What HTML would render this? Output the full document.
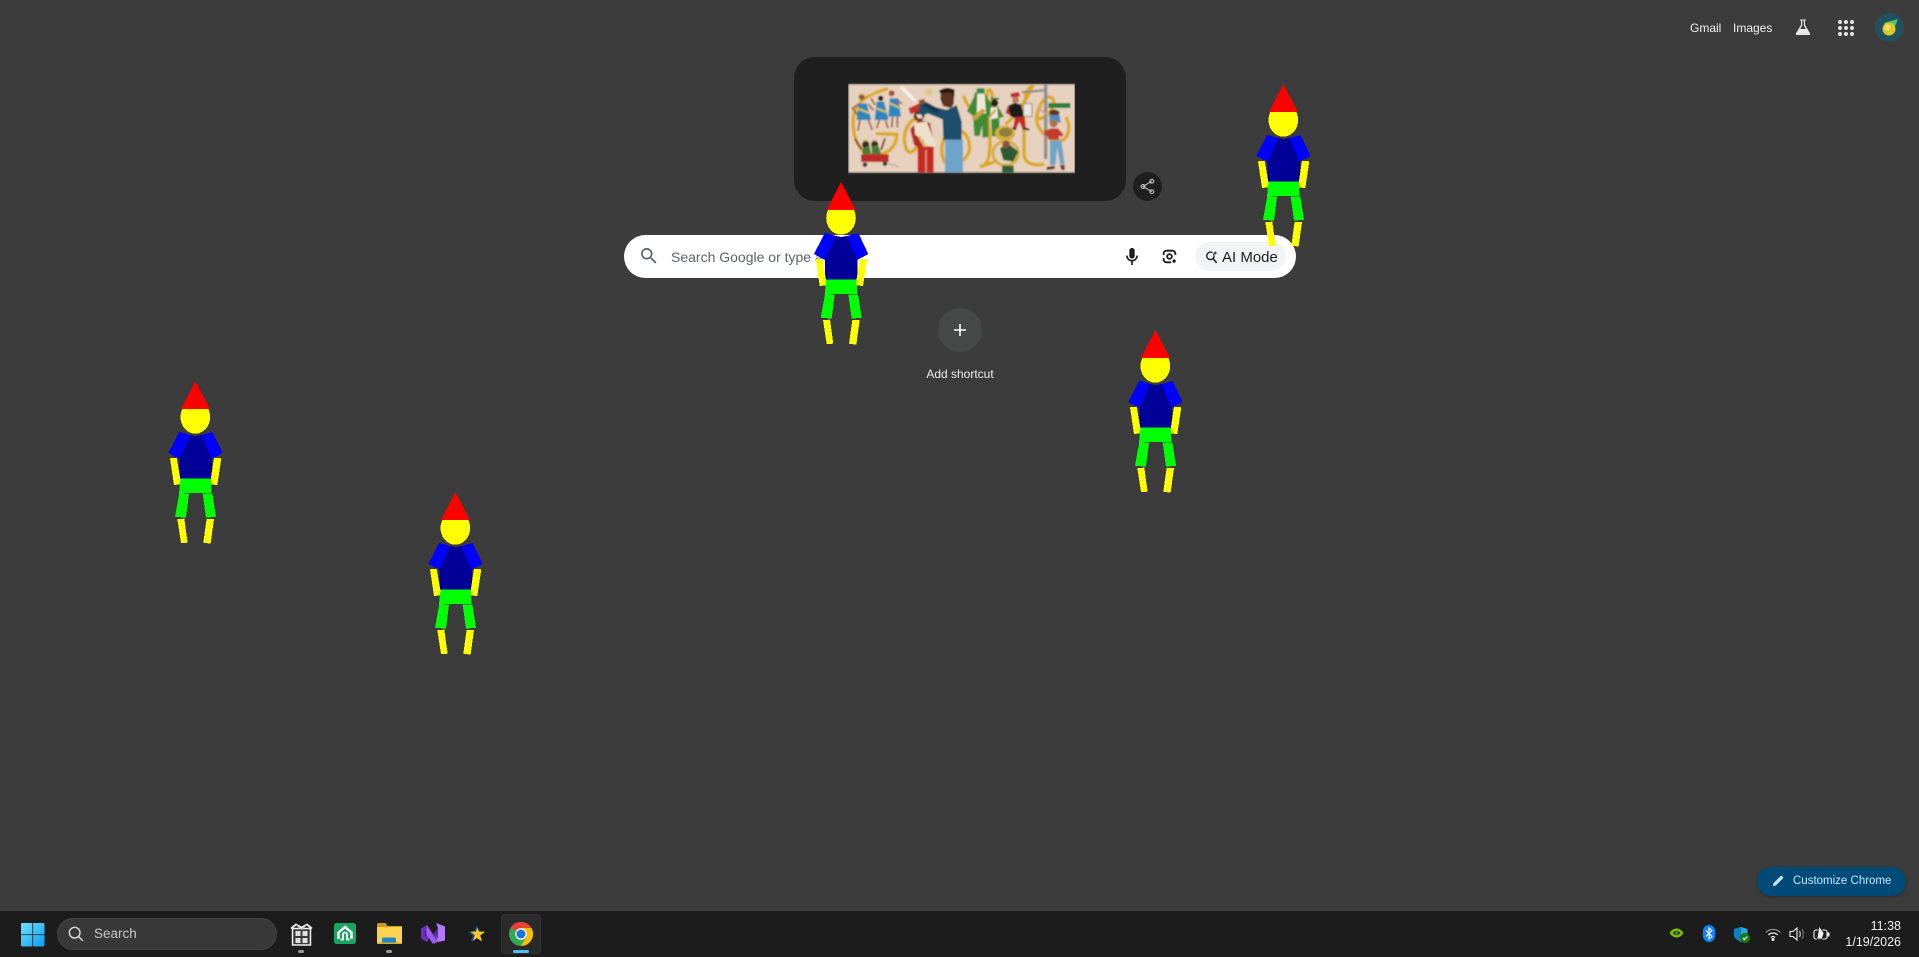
<!DOCTYPE html>
<html lang="en"><head><meta charset="utf-8"><title>New Tab</title>
<style>
html,body{margin:0;padding:0;width:1919px;height:957px;overflow:hidden;background:#3c3c3c;font-family:"Liberation Sans",sans-serif}
.a{position:absolute}
.t{position:absolute;white-space:nowrap}
</style></head><body>

<!-- top right -->
<div class="t" style="left:1690px;top:20px;font-size:12px;line-height:16px;color:#f1f1f1">Gmail</div>
<div class="t" style="left:1733px;top:20px;font-size:12px;line-height:16px;color:#f1f1f1">Images</div>
<svg class="a" style="left:1794px;top:18px" width="18" height="18" viewBox="0 0 18 18"><path d="M6 1.500h6v1H11v4.500l5 8.200c.5.900 0 1.800-1 1.800H3c-1 0-1.500-.9-1-1.800L7 7V2.500H6z" fill="#e8e8e8"/><path d="M8.200 2.500h1.600v5l2 3.500H6.200l2-3.500z" fill="#3c3c3c"/></svg>
<svg class="a" style="left:1837px;top:19px" width="18" height="18" viewBox="0 0 18 18" fill="#e3e3e3"><circle cx="3" cy="3" r="2"/><circle cx="9" cy="3" r="2"/><circle cx="15" cy="3" r="2"/><circle cx="3" cy="9" r="2"/><circle cx="9" cy="9" r="2"/><circle cx="15" cy="9" r="2"/><circle cx="3" cy="15" r="2"/><circle cx="9" cy="15" r="2"/><circle cx="15" cy="15" r="2"/></svg>
<svg class="a" style="left:1875px;top:13px" width="29" height="29" viewBox="0 0 29 29"><circle cx="14.500" cy="14.500" r="14.500" fill="#23505f"/><path d="M9 10L23 6L17 21z" fill="#4fc46c"/><circle cx="14" cy="16" r="6.500" fill="#d8c92e"/><circle cx="12.500" cy="14.500" r="3" fill="#efe25a"/></svg>

<!-- doodle card -->
<div class="a" style="left:794px;top:57px;width:332px;height:144px;border-radius:21px;background:#1f1f1f"></div>
<svg class="a" style="left:840px;top:75px" width="240" height="105" viewBox="0 0 720 315">
<defs><filter id="b" x="0" y="0" width="100%" height="100%"><feGaussianBlur stdDeviation="2"/></filter></defs>
<g filter="url(#b)">
<rect x="25" y="26" width="680" height="268" fill="#e6d0be"/>
<rect x="25" y="26" width="680" height="3" fill="#8f887f"/>
<rect x="25" y="291" width="680" height="4" fill="#8f887f"/>
<g fill="none" stroke="#dca817" stroke-width="10" stroke-linecap="round">
<path d="M140 42C95 55 45 75 40 130C36 190 60 240 100 240C150 240 170 210 170 178L112 176"/>
<path d="M225 130C195 150 185 190 200 225C215 245 240 215 240 175C240 150 232 135 225 130"/>
<path d="M345 165C305 175 298 225 312 258C328 280 375 270 388 225C392 190 375 165 345 165"/>
<path d="M372 65C385 110 425 120 445 95C465 70 455 40 445 45C430 70 450 150 450 200C450 250 440 275 420 275L460 262"/>
<path d="M578 35C560 35 555 60 552 110L552 240C555 268 585 272 608 268"/>
<path d="M590 125C600 145 650 105 640 75C625 45 590 90 590 135C595 175 640 205 670 195C690 180 690 150 680 130"/>
<path d="M500 145C530 120 555 80 575 40"/>
</g>
<!-- cheerleaders -->
<g>
<path d="M55 85h25l14 50H50z" fill="#2f86bf"/><circle cx="65" cy="66" r="9" fill="#8a5a35"/><path d="M56 60q9-10 18 0z" fill="#e3a33a"/>
<path d="M110 80h22l14 55h-42z" fill="#2f86bf"/><circle cx="122" cy="70" r="8" fill="#2b1d18"/>
<path d="M150 70h25l8 55h-38z" fill="#2f86bf"/><circle cx="155" cy="55" r="9" fill="#a5563e"/>
<path d="M60 135l-6 32M85 135l12 30M118 135l-8 25M136 135l8 25M158 125l-3 32M172 125l0 32" stroke="#9a5f3c" stroke-width="5"/>
<path d="M50 100l38 14M110 100l30 12M150 85l30 14M90 60l24-15" stroke="#d8c04a" stroke-width="6"/>
<path d="M55 88l-18 12 18 22M85 88l15 18M105 90L93 70M172 75l14 12" fill="none" stroke="#9a5f3c" stroke-width="5"/>
</g>
<!-- wagon -->
<path d="M45 192l20 30M135 190l-12 35" stroke="#7a4a2a" stroke-width="6"/>
<circle cx="77" cy="209" r="11" fill="#3a2a1e"/><circle cx="104" cy="209" r="11" fill="#3a2a1e"/>
<path d="M67 198l7-5 3 5 3-5 7 5zM94 198l7-5 3 5 3-5 7 5z" fill="#d9a52a"/>
<path d="M66 220l22-8 6 26H68zM94 214l20-4 10 28H96z" fill="#4a7a36"/>
<rect x="63" y="238" width="83" height="23" fill="#bd2a25"/>
<circle cx="75" cy="269" r="7" fill="#3c3a38"/><circle cx="135" cy="266" r="7" fill="#3c3a38"/>
<path d="M146 265l30 10" stroke="#8c8780" stroke-width="2"/>
<!-- feather -->
<path d="M186 38L224 76" stroke="#f5f0ea" stroke-width="10" stroke-linecap="round"/>
<path d="M250 42l10 6 8-8 6 8 8-4-8 18h-14z" fill="#dfc786"/>
<!-- band kid -->
<path d="M212 160l28-26 30 10 14 70-6 20-42-15-14-10-10-40z" fill="#b52a22"/>
<path d="M222 145l38-5 12 30 18 45-25 10-15-30-24-15z" fill="#eae0cc"/>
<path d="M240 180l18 30 28 10-6 8-26-8-18-30z" fill="#d9c17f"/>
<rect x="233" y="215" width="48" height="78" fill="#c42a1f"/>
<rect x="256" y="225" width="4" height="68" fill="#e8a0a0"/>
<circle cx="237" cy="122" r="16" fill="#5c3526"/>
<path d="M205 100l36-16 9 16-38 18z" fill="#c72d25"/>
<path d="M228 118h16l4 12h-14z" fill="#e8dccb"/>
<!-- man -->
<path d="M240 85l80 20 30-15 15 50v55h-55l-2-62-45-18-15 8-12-12z" fill="#1f4e6b"/>
<path d="M240 80l55 30" stroke="#15384f" stroke-width="16"/>
<rect x="315" y="194" width="54" height="98" fill="#6ea4ca"/>
<path d="M303 45q22-14 40 2l-2 40-8 12-24-6-8-22z" fill="#5c3020"/>
<path d="M296 48q20-14 48-4l-2 25-8-18-32 4z" fill="#1f1512"/>
<path d="M235 76l18-4 4 12-16 6z" fill="#8a5334"/>
<!-- green band -->
<path d="M405 52h28l24 40-12 30v65h-18v-38l-8 34h-16l-4-60-18-15 20-40z" fill="#3f8b35"/>
<path d="M410 40h24v14h-24z" fill="#2c8a3d"/>
<path d="M412 56h22l4 60-28-4z" fill="#efe8d6"/>
<path d="M395 128l32-28 10 8-30 28z" fill="#c9a23a"/>
<path d="M452 68h25v6h-25z" fill="#2c8a3d"/>
<circle cx="464" cy="84" r="11" fill="#2b1d18"/>
<path d="M448 95h26l18 30-14 4v55h-22l-3-60-14 6z" fill="#3f8b35"/>
<path d="M452 97h20l2 32-24 4z" fill="#efe8d6"/>
<path d="M445 130l22-26" stroke="#c9a23a" stroke-width="6"/>
<!-- tuba -->
<ellipse cx="495" cy="175" rx="30" ry="23" fill="#d6ad3c"/><ellipse cx="497" cy="172" rx="20" ry="14" fill="#8f7d3a"/>
<ellipse cx="497" cy="235" rx="38" ry="36" fill="none" stroke="#d6ad3c" stroke-width="9"/>
<path d="M480 220l25-15 30 25-15 30-30-5z" fill="#2e5a32"/>
<circle cx="498" cy="208" r="11" fill="#8a5334"/>
<rect x="486" y="272" width="35" height="21" fill="#2e5f34"/>
<!-- drummer -->
<path d="M512 55l25-4 3 14-27 3z" fill="#c02a25"/>
<circle cx="527" cy="75" r="10" fill="#b97a55"/>
<path d="M505 92l18-8 20 4 10 38-24 6-20-10z" fill="#1c1a1b"/>
<path d="M503 92l-6 22 16 8z" fill="#b52a22"/>
<rect x="550" y="86" width="26" height="38" rx="3" fill="#e9e5dc" stroke="#555" stroke-width="2"/>
<path d="M525 126h28l5 36h-10l-10-22-10 22h-9z" fill="#c42a22"/>
<path d="M518 158l10 6M548 160l20 4" stroke="#1c1a1b" stroke-width="6"/>
<!-- pole + sign -->
<rect x="612" y="27" width="10" height="225" fill="#8f8f8f"/>
<path d="M545 52l68-6" stroke="#8f8f8f" stroke-width="7"/>
<rect x="625" y="84" width="66" height="15" fill="#2a7d3f"/>
<!-- person -->
<path d="M595 100l30 20 20 0 15-10" fill="none" stroke="#d9a088" stroke-width="6"/>
<path d="M628 118h30l5 24h-35z" fill="#4b8ac3"/>
<path d="M628 108q14-10 30 2l-2 10h-26z" fill="#5a3524"/>
<circle cx="641" cy="145" r="12" fill="#a9735a"/>
<path d="M612 170l20-10h22l16 18-4 8-8-4-2 12h-30l-2-10-10-4z" fill="#c43a2f"/>
<path d="M630 196h34l10 72h-14l-8-50-6 52h-16z" fill="#6ea4ca"/>
<path d="M620 276l24-4v10l-24 3zM660 270h14v15h-10z" fill="#6b3a22"/>
</g></svg>
<div class="a" style="left:1133px;top:172px;width:29px;height:29px;border-radius:50%;background:#1f1f1f"></div>
<svg class="a" style="left:1139px;top:178px" width="17" height="17" viewBox="0 0 17 17"><path d="M12.800 3.300L4 8.500l8.800 5.200" fill="none" stroke="#c9c9c9" stroke-width="1"/><circle cx="12.800" cy="3.300" r="1.900" fill="none" stroke="#c9c9c9" stroke-width="1.100"/><circle cx="4" cy="8.500" r="1.900" fill="none" stroke="#c9c9c9" stroke-width="1.100"/><circle cx="12.800" cy="13.700" r="1.900" fill="none" stroke="#c9c9c9" stroke-width="1.100"/></svg>

<!-- search box -->
<div class="a" style="left:624px;top:235px;width:672px;height:43px;border-radius:22px;background:#fff"></div>
<svg class="a" style="left:641px;top:248px" width="16" height="16" viewBox="3 3 18 18" fill="#5f6368"><path d="M15.500 14h-.79l-.28-.27A6.471 6.471 0 0 0 16 9.500 6.500 6.500 0 1 0 9.500 16c1.610 0 3.090-.59 4.230-1.570l.27.28v.79l5 4.990L20.490 19l-4.990-5zm-6 0C7.010 14 5 11.990 5 9.500S7.010 5 9.500 5 14 7.010 14 9.500 11.990 14 9.500 14z"/></svg>
<div class="t" style="left:671px;top:248px;font-size:14px;line-height:18px;color:#5f6368">Search Google or type a URL</div>
<svg class="a" style="left:1126px;top:248px" width="12" height="17" viewBox="5 2 14 20" fill="#1f1f1f"><path d="M12 14.500c1.900 0 3.200-1.400 3.200-3.200V5.200C15.200 3.400 13.900 2 12 2S8.800 3.400 8.800 5.200v6.100c0 1.800 1.300 3.200 3.200 3.200zM17 11c0 2.760-2.240 5-5 5s-5-2.240-5-5H5c0 3.530 2.610 6.430 6 6.920V22h2v-4.080c3.390-.49 6-3.390 6-6.920h-2z"/></svg>
<svg class="a" style="left:1162px;top:249px" width="15" height="15" viewBox="0 0 18 18"><path d="M2 7V5.500C2 3.500 3.500 2 5.500 2H7M11 2h1.500C14.500 2 16 3.500 16 5.500V7M2 11v1.500C2 14.500 3.500 16 5.500 16H11" fill="none" stroke="#1f1f1f" stroke-width="2.300"/><circle cx="9" cy="9" r="2.800" fill="none" stroke="#1f1f1f" stroke-width="2.200"/><circle cx="14.500" cy="14.500" r="2" fill="#1f1f1f"/><rect x="6.500" y=".8" width="5" height="2.400" fill="#1f1f1f"/></svg>
<div class="a" style="left:1195px;top:242px;width:91px;height:29px;border-radius:15px;background:#f1f3f4"></div>
<svg class="a" style="left:1205px;top:250px" width="14" height="14" viewBox="0 0 17 18"><circle cx="6.500" cy="7.500" r="4.800" fill="none" stroke="#1f1f1f" stroke-width="1.800"/><path d="M10 11l4.500 5.500" stroke="#1f1f1f" stroke-width="2"/><path d="M12.500 0l1 2.800L16.500 4l-3 1.100L12.500 8l-1-2.900L8.500 4l3-1.200z" fill="#1f1f1f" stroke="#f1f3f4" stroke-width=".8"/></svg>
<div class="t" style="left:1222px;top:249px;font-size:15px;line-height:18px;color:#1f1f1f">AI Mode</div>

<!-- add shortcut -->
<div class="a" style="left:938px;top:308px;width:44px;height:44px;border-radius:50%;background:#474948"></div>
<svg class="a" style="left:954px;top:324px" width="12" height="12" viewBox="0 0 12 12"><path d="M6 0v12M0 6h12" stroke="#fff" stroke-width="1.600"/></svg>
<div class="t" style="left:860px;width:200px;top:366px;text-align:center;font-size:12px;line-height:16px;color:#ececec">Add shortcut</div>

<!-- customize chrome -->
<div class="a" style="left:1757px;top:867px;width:149px;height:29px;border-radius:15px;background:#004a77;box-shadow:0 1px 3px rgba(0,0,0,.3)"></div>
<svg class="a" style="left:1772px;top:875px" width="12" height="12" viewBox="0 0 14 14" fill="#c2e7ff"><path d="M1 13l.8-3.500L9.300 2l2.700 2.700L4.500 12.200zM10.200 1.200a1 1 0 0 1 1.400 0l1.200 1.200a1 1 0 0 1 0 1.400l-.8.800L9.400 2z"/></svg>
<div class="t" style="left:1793px;top:873px;font-size:11.500px;line-height:16px;color:#c2e7ff">Customize Chrome</div>

<!-- figures -->
<svg class="a" style="left:0;top:0;pointer-events:none" width="1919" height="957" shape-rendering="crispEdges">
<defs><g id="f">
<ellipse cx="0" cy="36" rx="14.800" ry="16.700" fill="#ff0"/>
<polygon points="0,0 -14.300,28 14.700,28" fill="#f00"/>
<polygon points="-16,52 -5,54 0,55 6,54 17,52 16.500,97.300 -16,97.300" fill="#009"/>
<polygon points="-16,50.700 -5.300,54 -16,78 -27,72" fill="#00f"/>
<polygon points="6.300,54 17.300,51 27.300,72 16.300,78" fill="#00f"/>
<polygon points="-25.300,77.300 -18.700,76.700 -14,103.300 -21.300,104" fill="#ff0"/>
<polygon points="18.700,76.700 26,77.300 22,104 14.700,103.300" fill="#ff0"/>
<polygon points="-14.700,97.300 15.300,97.300 16.300,112 -16.300,112.300" fill="#0f0"/>
<polygon points="-16,112.300 -6.300,112.300 -9.300,136.700 -20.300,135.700" fill="#0f0"/>
<polygon points="7.300,112.300 17,112.300 20.700,135.700 10.700,136.700" fill="#0f0"/>
<polygon points="-18,138 -11,137.700 -7.700,161.700 -14.300,162" fill="#ff0"/>
<polygon points="11.300,138 18.700,138 15.300,162.700 8,161.700" fill="#ff0"/>
</g></defs>
<use href="#f" x="195.300" y="381"/>
<use href="#f" x="455.300" y="492"/>
<use href="#f" x="841" y="182"/>
<use href="#f" x="1155.300" y="330"/>
<use href="#f" x="1283.300" y="84"/>
</svg>

<!-- taskbar -->
<div class="a" style="left:0;top:911px;width:1919px;height:46px;background:#1c1c1c"></div>
<svg class="a" style="left:21px;top:923px" width="23.500" height="23.500" viewBox="0 0 24 24"><defs><linearGradient id="w" x1="0" y1="0" x2="1" y2="1"><stop offset="0" stop-color="#6fe1ff"/><stop offset="1" stop-color="#0a9cf0"/></linearGradient></defs><path d="M0 1.500A1.500 1.500 0 0 1 1.500 0h10.100v11.600H0zM12.400 0h10.100A1.500 1.500 0 0 1 24 1.500v10.100H12.400zM0 12.400h11.600V24H1.500A1.500 1.500 0 0 1 0 22.500zM12.400 12.400H24v10.100a1.500 1.500 0 0 1-1.500 1.500H12.400z" fill="url(#w)"/></svg>
<div class="a" style="left:57px;top:918px;width:220px;height:32px;box-sizing:border-box;border-radius:16px;background:#383838;border:1px solid #434343"></div>
<svg class="a" style="left:68px;top:926px" width="16" height="16" viewBox="0 0 18 18"><circle cx="7.500" cy="7.500" r="6" fill="none" stroke="#d8d8d8" stroke-width="1.600"/><path d="M11.800 11.800l5 5" stroke="#d8d8d8" stroke-width="1.600"/></svg>
<div class="t" style="left:94px;top:925px;font-size:13.500px;line-height:18px;color:#c8c8c8">Search</div>

<!-- building -->
<svg class="a" style="left:290px;top:922px" width="23" height="24" viewBox="0 0 23 24"><path d="M2.500 6.500h18V23h-18z" fill="#3a3a3a" stroke="#f0f0f0" stroke-width="1.500"/><path d="M1 6.500l5-4 5.500 3 5.500-3 5 4" fill="none" stroke="#f0f0f0" stroke-width="1.800"/><path d="M6 2.500l5.500 5 5.500-5" fill="none" stroke="#bbb" stroke-width="1"/><rect x="5.500" y="9" width="5" height="5" fill="#e0e0e0"/><rect x="12.500" y="9" width="5" height="5" fill="#e0e0e0"/><rect x="5.500" y="16" width="5" height="5" fill="#e0e0e0"/><rect x="12.500" y="16" width="5" height="5" fill="#e0e0e0"/></svg>
<div class="a" style="left:298px;top:950px;width:6px;height:3px;border-radius:2px;background:#9a9a9a"></div>
<!-- green -->
<svg class="a" style="left:334px;top:923px" width="22" height="21" viewBox="0 0 22 21"><rect width="22" height="21" rx="2.500" fill="#1ba35f"/><path d="M4.500 16v-6.500L11 4l6.500 5.500V16" fill="none" stroke="#fff" stroke-width="2.400"/><path d="M6.500 16.500h2.500V11.500a2 2 0 0 1 4 0v5h2.500" fill="none" stroke="#fff" stroke-width="1.800"/></svg>
<!-- folder -->
<svg class="a" style="left:377px;top:923px" width="25" height="21" viewBox="0 0 25 21"><path d="M0 2a2 2 0 0 1 2-2h6.500l2 3H25v5H0z" fill="#d29a1c"/><path d="M0 4h25v17H0z" fill="#fbd34e"/><path d="M5 21v-4.500a2 2 0 0 1 2-2h10a2 2 0 0 1 2 2V21z" fill="#1a86d0"/><rect y="19.500" width="25" height="1.500" fill="#e0a91f"/></svg>
<div class="a" style="left:386px;top:950px;width:6px;height:3px;border-radius:2px;background:#9a9a9a"></div>
<!-- VS -->
<svg class="a" style="left:421px;top:923px" width="24" height="21" viewBox="0 0 24 21"><path d="M0 5.500L6 2l5 8.500L6 19l-6-3.500z" fill="#6a2fc0"/><path d="M4 8l3 2.500L4 13z" fill="#2a1050"/><path d="M6 2L17 19l-5 2-7-10z" fill="#9a5cec"/><path d="M15 0l9 3.500v14L17 19l-4-8.500L17 5z" fill="#b27af5"/><path d="M13 10.500L17 5v11z" fill="#5a25a8"/></svg>
<!-- star -->
<svg class="a" style="left:467px;top:925px" width="19" height="18" viewBox="0 0 19 18"><path d="M10 1l2 5.500 6 .2-4.700 3.800 1.700 6-5-3.400-5.300 3.400 2-6L2 6.700l6-.2z" fill="#f6c62c"/><path d="M8 6.500L10 1M2 6.700L6.700 10.500 4.700 16.500" fill="none" stroke="#14408f" stroke-width="1.800"/></svg>
<!-- chrome -->
<div class="a" style="left:501px;top:914px;width:40px;height:40px;box-sizing:border-box;border-radius:4px;background:#2a2a2a;border:1px solid #323232"></div>
<svg class="a" style="left:509px;top:922px" width="24" height="24" viewBox="0 0 48 48"><circle cx="24" cy="24" r="24" fill="#34a853"/><path d="M24 0a24 24 0 0 1 20.800 12H24a12 12 0 0 0-10.400 6L3.200 12A24 24 0 0 1 24 0z" fill="#ea4335"/><path d="M44.800 12H24l10.400 18L24 48A24 24 0 0 0 44.800 12z" fill="#fbbc04"/><circle cx="24" cy="24" r="11.500" fill="#fff"/><circle cx="24" cy="24" r="9" fill="#1a73e8"/></svg>
<div class="a" style="left:513px;top:950px;width:16px;height:3px;border-radius:2px;background:#4cc2ff"></div>

<!-- tray -->
<svg class="a" style="left:1670px;top:927px" width="13" height="12" viewBox="0 0 14 12"><path d="M1 6q6-7 12 0q-6 7-12 0z" fill="none" stroke="#76b900" stroke-width="3"/><circle cx="7" cy="6" r="1.300" fill="#76b900"/></svg>
<svg class="a" style="left:1703px;top:925px" width="12" height="17" viewBox="0 0 12 17"><rect width="12" height="17" rx="6" fill="#0a84ff"/><path d="M3 5.500l6 6L6 14V3l3 2.500L3 11.500" fill="none" stroke="#fff" stroke-width="1.100"/></svg>
<svg class="a" style="left:1734px;top:926px" width="16" height="17" viewBox="0 0 16 17"><path d="M7 1l6.500 2V9c0 3-3 5.500-6.500 7-3.500-1.500-7-4-7-7V3z" fill="#2aa8e0"/><path d="M7 1v15C3.500 14.500 0 12 0 9V3z" fill="#0f7fc0"/><circle cx="11" cy="12" r="5" fill="#107c10"/><path d="M8.800 12l1.600 1.600 2.800-3" fill="none" stroke="#fff" stroke-width="1.200"/></svg>
<svg class="a" style="left:1765px;top:928px" width="16" height="13" viewBox="0 0 16 13" fill="none" stroke="#f0f0f0" stroke-width="1.200"><path d="M.8 4.500a10 10 0 0 1 14.400 0" stroke="#999"/><path d="M3.300 7a6.500 6.500 0 0 1 9.400 0"/><path d="M5.800 9.500a3 3 0 0 1 4.400 0"/><circle cx="8" cy="11.500" r=".9" fill="#f0f0f0"/></svg>
<svg class="a" style="left:1789px;top:926px" width="17" height="16" viewBox="0 0 17 16" fill="none" stroke="#f0f0f0" stroke-width="1.100"><path d="M1 5.500h3L8 2v12l-4-3.500H1z"/><path d="M10.500 5q1.500 3 0 6" stroke="#ddd"/><path d="M13 3q2.500 5 0 10" stroke="#777"/></svg>
<svg class="a" style="left:1813px;top:925px" width="17" height="16" viewBox="0 0 17 16"><rect x="1" y="5" width="13" height="9" rx="2" fill="none" stroke="#f0f0f0" stroke-width="1.100"/><rect x="14.500" y="7.500" width="2" height="4" fill="#f0f0f0"/><path d="M4 14L6 1l5 7-2 6z" fill="#f0f0f0" stroke="#1c1c1c" stroke-width=".7"/></svg>
<div class="t" style="left:1801px;width:100px;top:918px;text-align:right;font-size:12.500px;line-height:16px;color:#f2f2f2">11:38</div>
<div class="t" style="left:1801px;width:100px;top:934px;text-align:right;font-size:12.500px;line-height:16px;color:#f2f2f2">1/19/2026</div>
</body></html>
